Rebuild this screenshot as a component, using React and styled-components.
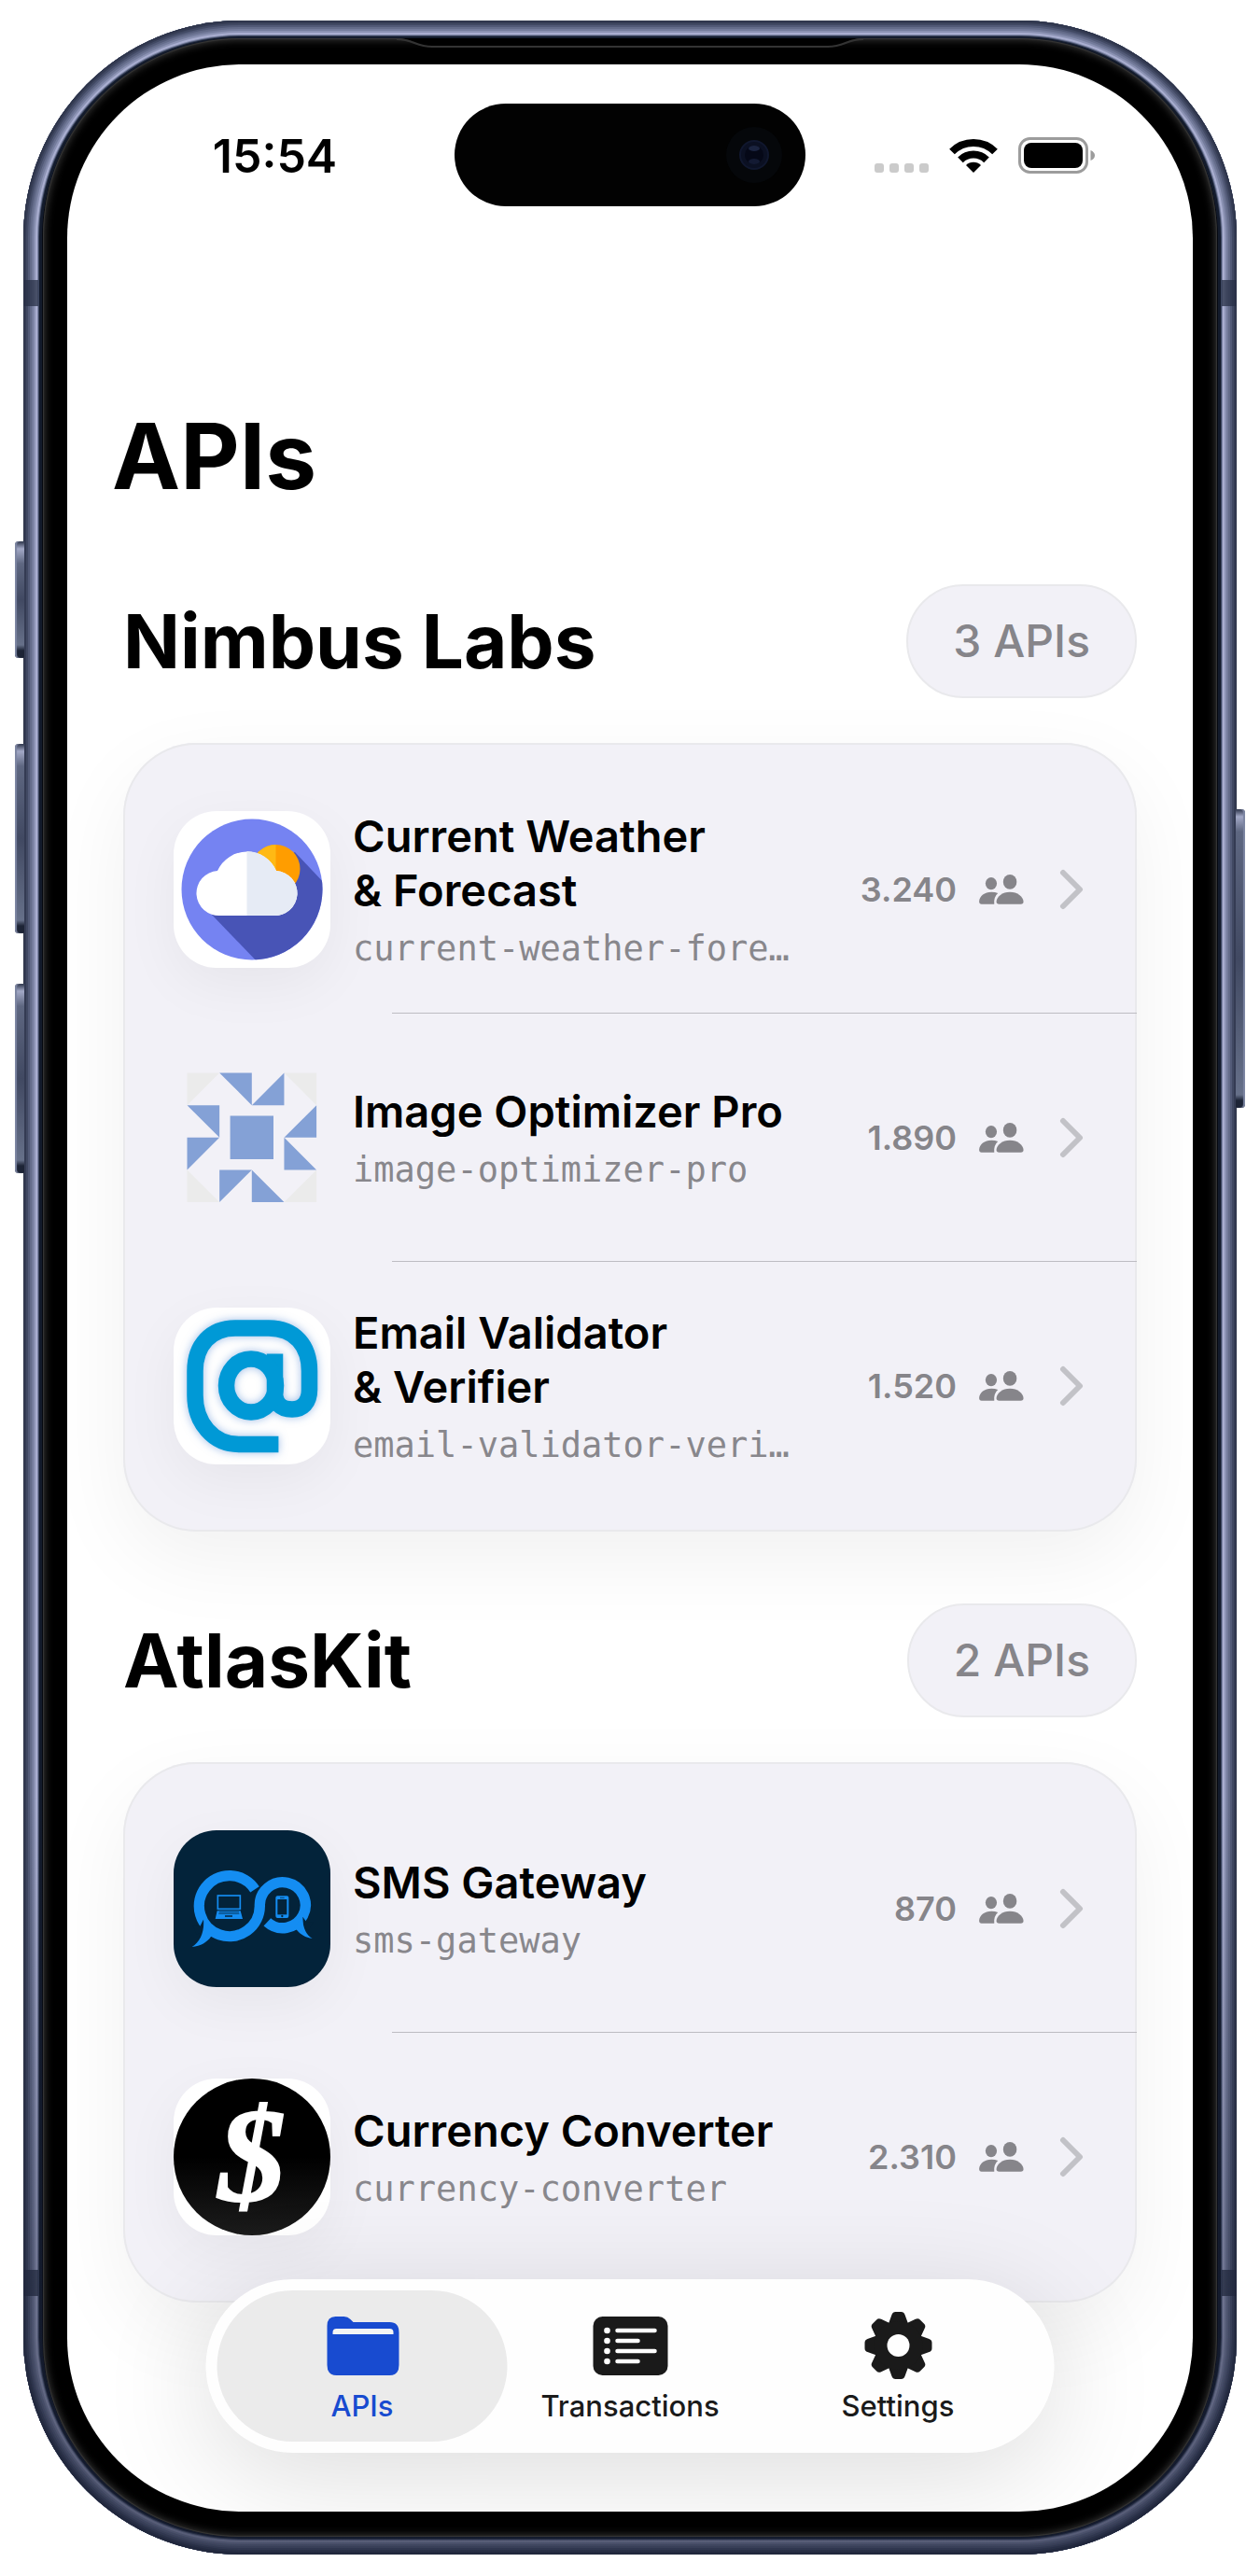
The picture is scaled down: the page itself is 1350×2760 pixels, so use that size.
import React from "react";
import styled, { createGlobalStyle, css } from "styled-components";

const GlobalStyle = createGlobalStyle`
  *, *::before, *::after { box-sizing: border-box; }
  body { margin: 0; background: #fff; }
  h1, h2, p, ul { margin: 0; padding: 0; }
  ul { list-style: none; }
`;

const sans = `Inter, "Liberation Sans", sans-serif`;

/* ---------- Device ---------- */

const Device = styled.div`
  position: relative;
  margin: 22px 25px;
  padding: 19px 21px;
  border-radius: 233px;
  background: #05080f;
  font-family: ${sans};
  color: #000;
  box-shadow:
    inset 0 0 0 1px #2c3347,
    inset 0 0 0 3px #343b53,
    inset 0 0 0 5px #414963,
    inset 0 0 0 7px #525a77,
    inset 0 0 0 9px #646c8a,
    inset 0 0 0 11px #747c9c,
    inset 0 0 0 13px #8b92b3,
    inset 0 0 0 15px #a9aed0,
    inset 0 0 0 16px #7d85a4,
    inset 0 0 0 17px #3c4660,
    inset 0 0 0 20px #131b2c;

  &::after {
    content: "";
    position: absolute;
    inset: 0;
    border-radius: 233px;
    background: linear-gradient(180deg, rgba(20, 26, 46, 0) 70%, rgba(20, 26, 46, 0.55) 97%);
    pointer-events: none;
  }
`;

const Bezel = styled.div`
  position: relative;
  z-index: 1;
  padding: 28px 26px 27px;
  border-radius: 212px;
  background: #000;
  box-shadow: inset 0 0 1px 1px #363636, inset 0 0 10px 1px #424242;
`;

const Earpiece = styled.svg`
  position: absolute;
  top: 0;
  left: 50%;
  width: 500px;
  height: 14px;
  margin-left: -250px;
`;

const Screen = styled.div`
  position: relative;
  overflow: hidden;
  border-radius: 186px;
  background: #fff;
  padding-bottom: 224px;
`;

const SideButton = styled.span`
  position: absolute;
  width: 10px;
  top: ${(p) => p.$top}px;
  height: ${(p) => p.$length}px;
  background: linear-gradient(180deg, #2d354a 0, #a2a8c6 8px, #5e6781 24px, #414962 50%, #667089 calc(100% - 14px), #1d2436 calc(100% - 8px), #1d2436 100%);
  ${(p) =>
    p.$side === "left"
      ? css`
          left: -9px;
          border-radius: 4px 0 0 4px;
          box-shadow: inset 2px 0 1px #7d86a2;
        `
      : css`
          right: -9px;
          border-radius: 0 4px 4px 0;
          box-shadow: inset -2px 0 1px #7d86a2;
        `}
`;

const AntennaBand = styled.span`
  position: absolute;
  width: 16px;
  height: 28px;
  background: rgba(40, 48, 70, 0.75);
  ${(p) => (p.$side === "left" ? "left: 0;" : "right: 0;")}
  ${(p) => (p.$edge === "top" ? "top: 278px;" : "bottom: 277px;")}
`;

/* ---------- Status bar ---------- */

const StatusBar = styled.div`
  display: grid;
  grid-template-columns: 1fr 376px 1fr;
  align-items: center;
  padding-top: 42px;
`;

const Time = styled.time`
  padding: 2px 0 0 30px;
  text-align: center;
  font-size: 50px;
  line-height: 60px;
  font-weight: 600;
`;

const Island = styled.div`
  display: flex;
  align-items: center;
  justify-content: flex-end;
  height: 110px;
  padding-right: 25px;
  border-radius: 55px;
  background: #020202;
`;

const StatusIcons = styled.div`
  display: flex;
  align-items: center;
  justify-content: center;
  gap: 22px;
  padding: 2px 30px 0 0;
`;

/* ---------- Content ---------- */

const PageTitle = styled.h1`
  padding: 208px 48px 0;
  font-size: 98px;
  line-height: 120px;
  font-weight: 700;
`;

const Sections = styled.main`
  display: flex;
  flex-direction: column;
  gap: 77px;
  padding: 77px 60px 0;
`;

const SectionHeader = styled.header`
  display: flex;
  align-items: center;
  justify-content: space-between;
  margin-bottom: 48px;
`;

const SectionTitle = styled.h2`
  font-size: 80px;
  line-height: 96px;
  font-weight: 700;
`;

const CountPill = styled.span`
  padding: 29px 48px;
  border: 2px solid #e9e9ec;
  border-radius: 61px;
  background: #f2f1f7;
  color: #86858a;
  font-size: 48px;
  line-height: 60px;
  font-weight: 500;
`;

const Card = styled.ul`
  padding: 24px 0;
  border-radius: 78px;
  background: #f2f1f7;
  box-shadow: inset 0 0 0 2px #e9e9ec, 0 30px 90px rgba(0, 0, 0, 0.06);
`;

const Item = styled.li`
  & + & {
    background: linear-gradient(#bdbcc2, #bdbcc2) right top / calc(100% - 288px) 1px no-repeat;
    padding-top: 1px;
  }
`;

const Row = styled.a`
  display: flex;
  align-items: center;
  height: 265px;
  padding: 0 57px 0 54px;
  color: inherit;
  text-decoration: none;
`;

const AppIcon = styled.svg`
  flex: none;
  width: 168px;
  height: 168px;
  border-radius: 46px;
  background: ${(p) => p.$background || "transparent"};
  box-shadow: ${(p) => (p.$background ? "0 18px 60px rgba(0, 0, 0, 0.05)" : "none")};
`;

const Texts = styled.div`
  flex: 1;
  min-width: 0;
  display: flex;
  flex-direction: column;
  gap: 12px;
  margin: 0 48px 0 24px;
`;

const Name = styled.p`
  font-size: 47px;
  line-height: 58px;
  font-weight: 600;
`;

const Slug = styled.p`
  white-space: nowrap;
  color: #88878c;
  font-family: "DejaVu Sans Mono", "Liberation Mono", monospace;
  font-size: 37px;
  line-height: 44px;
`;

const Users = styled.span`
  display: flex;
  align-items: center;
  gap: 24px;
  color: #86858a;
  font-size: 36px;
  line-height: 44px;
  font-weight: 600;
`;

const Chevron = styled.svg`
  flex: none;
  width: 26px;
  height: 44px;
  margin-left: 38px;
`;

/* ---------- Tab bar ---------- */

const TabBar = styled.nav`
  position: absolute;
  left: 50%;
  bottom: 63px;
  transform: translateX(-50%);
  display: flex;
  padding: 12px;
  border-radius: 93px;
  background: #fefefe;
  box-shadow: 0 24px 120px rgba(0, 0, 0, 0.14);
`;

const Tab = styled.button`
  display: flex;
  flex-direction: column;
  align-items: center;
  gap: 11px;
  width: 311px;
  height: 162px;
  padding: 23px 0 0;
  border: 0;
  border-radius: 81px;
  background: ${(p) => (p.$active ? "#ebebeb" : "transparent")};
  color: ${(p) => (p.$active ? "#184bd0" : "#1a1a1a")};
  font-family: ${sans};
  font-size: 31px;
  line-height: 36px;
  font-weight: 500;

  & + & {
    margin-left: -24px;
  }
`;

/* ---------- Drawings ---------- */

const CameraLens = () => (
  <svg width="60" height="72" viewBox="0 0 60 72" aria-hidden="true">
    <circle cx="30" cy="36" r="30" fill="#05070a" />
    <circle cx="30" cy="36" r="15" fill="#0b1022" stroke="#10172e" strokeWidth="2" />
    <circle cx="30" cy="36" r="10" fill="#050817" />
    <ellipse cx="30" cy="29" rx="6" ry="3" fill="#1b2440" />
    <ellipse cx="30" cy="43" rx="6" ry="3" fill="#131a33" />
  </svg>
);

const SignalDots = () => (
  <svg width="58" height="38" viewBox="0 0 58 38" aria-hidden="true">
    {[0, 16, 32, 48].map((x) => (
      <rect key={x} x={x} y="27" width="10" height="10" rx="3" fill="#cbcbcb" />
    ))}
  </svg>
);

const Wifi = () => (
  <svg width="52" height="38" viewBox="0 0 52 38" aria-hidden="true">
    <path d="M3 14.500A32.500 32.500 0 0 1 49 14.500" fill="none" stroke="#000" strokeWidth="8" />
    <path d="M12 23.300A20 20 0 0 1 40 23.300" fill="none" stroke="#000" strokeWidth="8" />
    <path d="M18 29A11.500 11.500 0 0 1 34 29L26 37Z" />
  </svg>
);

const Battery = () => (
  <svg width="83" height="40" viewBox="0 0 83 40" aria-hidden="true">
    <rect x="1.500" y="1.500" width="72" height="36" rx="11" fill="none" stroke="#9c9c9c" strokeWidth="3" />
    <rect x="6" y="6" width="63" height="27" rx="8" />
    <path d="M77.500 14Q82 16 82 19.500T77.500 25Z" fill="#9c9c9c" />
  </svg>
);

const People = () => (
  <svg width="48" height="32" viewBox="600 258 145 97" fill="#86858a" aria-hidden="true">
    <ellipse cx="639" cy="287" rx="18.500" ry="20" />
    <ellipse cx="700" cy="282" rx="22" ry="24" />
    <path d="M600 345C602 328 617 315 640 315Q652 315 661 319Q647 331 649 354H608Q600 354 600 345Z" />
    <path d="M656 346C657 330 675 315 700 315C725 315 743 330 744 346Q744 354 735 354H665Q656 354 656 346Z" />
  </svg>
);

const RowChevron = () => (
  <Chevron viewBox="0 0 26 44" aria-hidden="true">
    <path d="M4 4L22 22L4 40" fill="none" stroke="#c2c2c7" strokeWidth="6" strokeLinecap="round" strokeLinejoin="round" />
  </Chevron>
);

const WeatherIcon = () => (
  <AppIcon viewBox="0 0 168 168" $background="#fff" aria-hidden="true">
    <clipPath id="sky">
      <circle cx="84" cy="84" r="75.500" />
    </clipPath>
    <circle cx="84" cy="84" r="75.500" fill="#7583f2" />
    <path d="M39 109L92 164L164 160V80L130 44L100 60Z" fill="#4854b6" clipPath="url(#sky)" />
    <circle cx="109.500" cy="62" r="26" fill="#ff9d00" />
    <path d="M109.500 36A26 26 0 0 0 109.500 88Z" fill="#ffb914" />
    <path d="M50 112A24 24 0 0 1 47 64A34.500 34.500 0 0 1 110 64A24 24 0 0 1 107 112Z" fill="#fff" />
    <path d="M78.500 43A34.500 34.500 0 0 1 110 64A24 24 0 0 1 107 112H78.500Z" fill="#e6ebf5" />
  </AppIcon>
);

const OptimizerIcon = () => (
  <AppIcon viewBox="0 0 168 168" aria-hidden="true">
    <g transform="translate(14.500 14.500) scale(34.650)">
      <path d="M0 0H1L0 1ZM3 0H4V1ZM0 3V4H1ZM4 3V4H3Z" fill="#ebebeb" />
      <path
        d="M1 0H2V1ZM3 0V1H2ZM0 1H1V2ZM0 2H1L0 3ZM4 1V2H3ZM3 2V3H4ZM1 3H2L1 4ZM2 3V4H3ZM1.330 1.330H2.670V2.670H1.330Z"
        fill="#84a1d6"
      />
    </g>
  </AppIcon>
);

const EmailIcon = () => (
  <AppIcon viewBox="0 0 168 168" $background="#fff" aria-hidden="true">
    <g
      fill="none"
      stroke="#0099d6"
      strokeWidth="17.500"
      style={{ filter: "drop-shadow(0 0 5px rgba(60, 120, 205, 0.5))" }}
    >
      <path d="M112.400 146.500H70C42 146.500 23 123 23 94V68C23 40 40 22 66 22H102C130 22 145.500 41 145.500 68V88C145.500 102 138 109 127 109C114 109 108.500 102 108.500 90V49.500" />
      <ellipse cx="83" cy="83.500" rx="26.500" ry="28.500" />
    </g>
  </AppIcon>
);

const SmsIcon = () => (
  <AppIcon viewBox="18 18 504 504" $background="#03233a" aria-hidden="true">
    <path d="M279 208A97.500 97.500 0 1 0 295 262A73.500 73.500 0 1 1 319 313" fill="none" stroke="#148df2" strokeWidth="34" />
    <path d="M103 326L115 303L120 345L92 352L80 326ZM446 314L433 296L434 330L452 340L466 314Z" fill="#03233a" />
    <path d="M114 300C118 345 104 375 77 393C105 390 126 378 138 360L150 345ZM432 298C434 335 446 356 464 366C442 364 425 352 415 340L405 330Z" fill="#148df2" />
    <rect x="160" y="228" width="72" height="43" fill="none" stroke="#148df2" strokeWidth="5" />
    <path d="M158 277H233L240 303H152Z" fill="#148df2" />
    <path d="M164 281H228M163 286H229" stroke="#03233a" strokeWidth="2" />
    <path d="M183 294H207" stroke="#03233a" strokeWidth="5" />
    <rect x="346" y="229" width="42" height="71" rx="6" fill="#148df2" />
    <rect x="352" y="240" width="30" height="49" fill="#03233a" />
    <circle cx="367" cy="294" r="3.500" fill="#03233a" />
    <path d="M360 235H374" stroke="#03233a" strokeWidth="2" />
  </AppIcon>
);

const CurrencyIcon = () => (
  <AppIcon viewBox="0 0 168 168" $background="#fff" aria-hidden="true">
    <linearGradient id="coin" x1="0" y1="0" x2="0" y2="1">
      <stop offset="0.5" stopColor="#000" />
      <stop offset="1" stopColor="#1c1c1c" />
    </linearGradient>
    <circle cx="84" cy="84" r="84" fill="url(#coin)" />
    <text
      x="84"
      y="131"
      textAnchor="middle"
      fill="#fff"
      stroke="#fff"
      strokeWidth="2"
      fontFamily="Liberation Serif, serif"
      fontSize="144"
      fontWeight="700"
      fontStyle="italic"
    >
      $
    </text>
  </AppIcon>
);

const FolderGlyph = () => (
  <svg width="82" height="72" viewBox="0 0 82 72" aria-hidden="true">
    <path
      d="M3 15Q3 5 12 5H21Q25 5 28 8L31 11H70Q80 11 80 22V57Q80 68 70 68H13Q3 68 3 57Z"
      fill="#184bd0"
    />
    <path d="M9 24V22Q9 18 13 18H70Q74 18 74 22V24Z" fill="#f4f4f4" />
  </svg>
);

const ListGlyph = () => (
  <svg width="82" height="72" viewBox="0 0 82 72" aria-hidden="true">
    <rect x="1" y="5" width="80" height="63" rx="10" fill="#1a1a1a" />
    {[20, 31, 42, 53].map((y, i) => (
      <g key={y} stroke="#fff" strokeWidth="4.500" strokeLinecap="round">
        <circle cx="16" cy={y} r="3.300" fill="#fff" stroke="none" />
        <path d={`M27 ${y}H${i % 2 ? 49 : 67}`} />
      </g>
    ))}
  </svg>
);

const GearGlyph = () => (
  <svg width="82" height="72" viewBox="-41 -36 82 72" aria-hidden="true">
    <g fill="#1a1a1a">
      {[0, 45, 90, 135, 180, 225, 270, 315].map((angle) => (
        <path
          key={angle}
          transform={`rotate(${angle})`}
          d="M-11 -22L-7 -33Q-6 -36 -3 -36H3Q6 -36 7 -33L11 -22Z"
        />
      ))}
      <circle r="26" />
    </g>
    <circle r="12" fill="#fefefe" />
  </svg>
);

/* ---------- Data ---------- */

const sections = [
  {
    title: "Nimbus Labs",
    count: "3 APIs",
    apis: [
      { name: ["Current Weather", "& Forecast"], slug: "current-weather-fore…", users: "3.240", Icon: WeatherIcon },
      { name: ["Image Optimizer Pro"], slug: "image-optimizer-pro", users: "1.890", Icon: OptimizerIcon },
      { name: ["Email Validator", "& Verifier"], slug: "email-validator-veri…", users: "1.520", Icon: EmailIcon },
    ],
  },
  {
    title: "AtlasKit",
    count: "2 APIs",
    apis: [
      { name: ["SMS Gateway"], slug: "sms-gateway", users: "870", Icon: SmsIcon },
      { name: ["Currency Converter"], slug: "currency-converter", users: "2.310", Icon: CurrencyIcon },
    ],
  },
];

const tabs = [
  { label: "APIs", Glyph: FolderGlyph },
  { label: "Transactions", Glyph: ListGlyph },
  { label: "Settings", Glyph: GearGlyph },
];

const ApiRow = ({ name, slug, users, Icon }) => (
  <Item>
    <Row href="#api">
      <Icon />
      <Texts>
        <Name>
          {name.map((line, i) => (
            <React.Fragment key={line}>
              {i > 0 && <br />}
              {line}
            </React.Fragment>
          ))}
        </Name>
        <Slug>{slug}</Slug>
      </Texts>
      <Users>
        {users}
        <People />
      </Users>
      <RowChevron />
    </Row>
  </Item>
);

export default function App() {
  const [active, setActive] = React.useState("APIs");
  return (
    <>
      <GlobalStyle />
      <Device>
        <SideButton $side="left" $top={558} $length={125} />
        <SideButton $side="left" $top={775} $length={203} />
        <SideButton $side="left" $top={1032} $length={203} />
        <SideButton $side="right" $top={845} $length={320} />
        <AntennaBand $side="left" $edge="top" />
        <AntennaBand $side="right" $edge="top" />
        <AntennaBand $side="left" $edge="bottom" />
        <AntennaBand $side="right" $edge="bottom" />
        <Bezel>
          <Earpiece viewBox="0 0 500 14" aria-hidden="true">
            <path d="M0 0C18 0 20 8 38 8H462C480 8 482 0 500 0Z" fill="#000" />
            <path d="M0 1C18 1 20 9 38 9H462C480 9 482 1 500 1" fill="none" stroke="#333" strokeWidth="2" />
          </Earpiece>
          <Screen>
            <StatusBar>
              <Time>15:54</Time>
              <Island>
                <CameraLens />
              </Island>
              <StatusIcons>
                <SignalDots />
                <Wifi />
                <Battery />
              </StatusIcons>
            </StatusBar>
            <PageTitle>APIs</PageTitle>
            <Sections>
              {sections.map((section) => (
                <section key={section.title}>
                  <SectionHeader>
                    <SectionTitle>{section.title}</SectionTitle>
                    <CountPill>{section.count}</CountPill>
                  </SectionHeader>
                  <Card>
                    {section.apis.map((api) => (
                      <ApiRow key={api.slug} {...api} />
                    ))}
                  </Card>
                </section>
              ))}
            </Sections>
            <TabBar aria-label="Main">
              {tabs.map(({ label, Glyph }) => (
                <Tab key={label} type="button" $active={label === active} onClick={() => setActive(label)}>
                  <Glyph />
                  {label}
                </Tab>
              ))}
            </TabBar>
          </Screen>
        </Bezel>
      </Device>
    </>
  );
}
